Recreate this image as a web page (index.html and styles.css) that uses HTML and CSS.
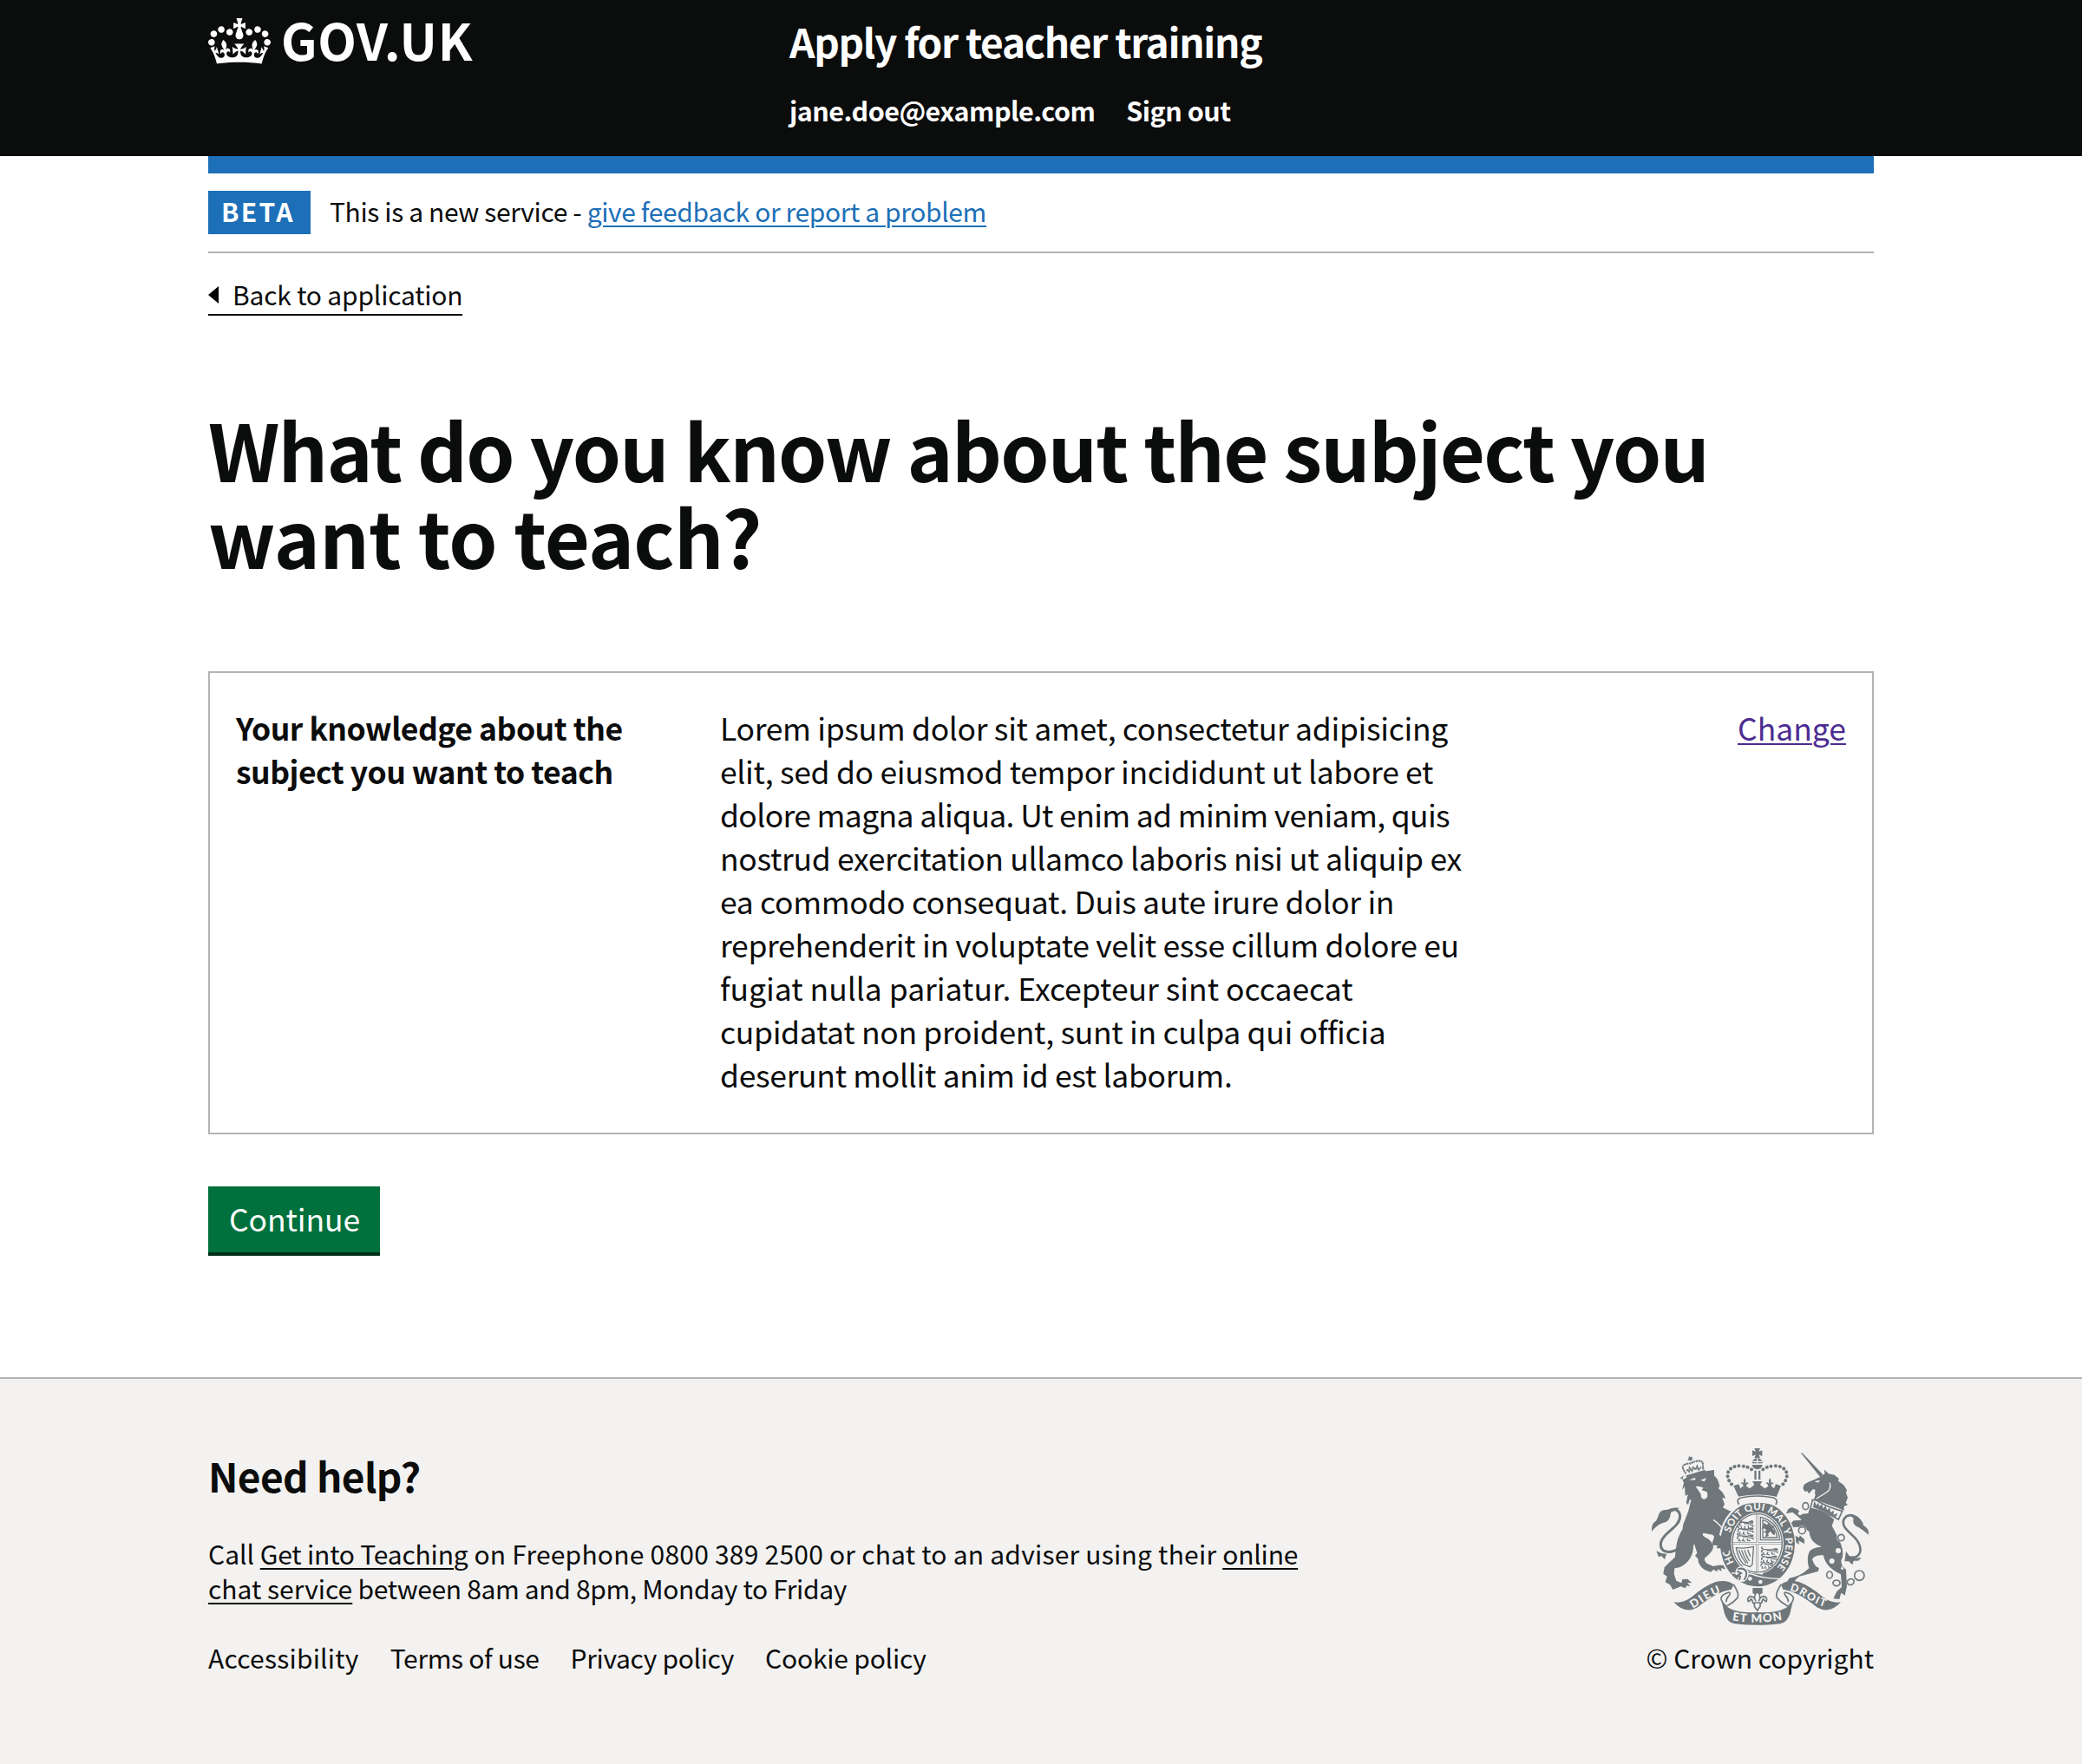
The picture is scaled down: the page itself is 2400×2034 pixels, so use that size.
FILE: index.html
```html
<!DOCTYPE html>
<html lang="en">
<head>
<meta charset="utf-8">
<title>What do you know about the subject you want to teach?</title>
<link rel="stylesheet" href="styles.css">
</head>
<body>
<header class="header">
  <div class="container header-grid">
    <a class="logo" href="#">
      <svg class="crown" viewBox="0 0 132 97" aria-hidden="true"><path fill="currentColor" fill-rule="evenodd" d="M25 30.2c3.5 1.5 7.7-.2 9.1-3.7 1.5-3.6-.2-7.8-3.9-9.2-3.6-1.4-7.6.3-9.1 3.9-1.4 3.5.3 7.5 3.9 9zM9 39.5c3.6 1.5 7.8-.2 9.2-3.7 1.5-3.6-.2-7.8-3.9-9.1-3.6-1.5-7.6.2-9.1 3.8-1.4 3.5.3 7.5 3.8 9zM4.4 57.2c3.5 1.5 7.7-.2 9.1-3.8 1.5-3.6-.2-7.7-3.9-9.1-3.5-1.5-7.6.3-9.1 3.8-1.4 3.5.3 7.6 3.9 9.1zm38.3-21.4c3.5 1.5 7.7-.2 9.1-3.8 1.5-3.6-.2-7.7-3.9-9.1-3.6-1.5-7.6.3-9.1 3.8-1.3 3.6.4 7.7 3.9 9.1zm64.4-5.6c-3.6 1.5-7.8-.2-9.1-3.7-1.5-3.6.2-7.8 3.8-9.2 3.6-1.4 7.7.3 9.2 3.9 1.3 3.5-.4 7.5-3.9 9zm15.9 9.3c-3.6 1.5-7.7-.2-9.1-3.7-1.5-3.6.2-7.8 3.7-9.1 3.6-1.5 7.7.2 9.2 3.8 1.5 3.5-.3 7.5-3.8 9zm4.7 17.7c-3.6 1.5-7.8-.2-9.2-3.8-1.5-3.6.2-7.7 3.9-9.1 3.6-1.5 7.7.3 9.2 3.8 1.3 3.5-.4 7.6-3.9 9.1zM89.3 35.8c-3.6 1.5-7.8-.2-9.2-3.8-1.4-3.6.2-7.7 3.9-9.1 3.6-1.5 7.7.3 9.2 3.8 1.4 3.6-.3 7.7-3.9 9.1zM69.7 17.7l8.9 4.7V9.3l-8.9 2.8c-.2-.3-.5-.6-.9-.9L72.4 0H59.6l3.5 11.2c-.3.3-.6.5-.9.9l-8.8-2.8v13.1l8.8-4.7c.3.3.6.7.9.9l-5 15.4v.1c-.2.8-.4 1.6-.4 2.4 0 4.1 3.1 7.5 7 8.1h.2c.3 0 .7.1 1 .1.4 0 .7 0 1-.1h.2c4-.6 7.1-4.1 7.1-8.1 0-.8-.1-1.7-.4-2.4V34l-5.1-15.4c.4-.2.7-.6 1-.9zM66 92.8c16.9 0 32.8 1.1 47.1 3.2 4-16.9 8.9-26.7 14-33.5l-9.6-3.4c1 4.9 1.1 7.2 0 10.2-1.5-1.4-3-4.3-4.2-8.7L108.6 76c2.8-2 5-3.2 7.5-3.3-4.4 9.4-10 11.9-13.6 11.2-4.3-.8-6.3-4.6-5.6-7.9 1-4.7 5.7-5.9 8-.5 4.3-8.7-3-11.4-7.6-8.8 7.1-7.2 7.9-13.5 2.1-21.1-8 6.1-8.1 12.3-4.5 20.8-4.7-5.4-12.1-2.5-9.5 6.2 3.4-5.2 7.9-2 7.2 3.1-.6 4.3-6.4 7.8-13.5 7.2-10.3-.9-10.9-8-11.2-13.8 2.5-.5 7.1 1.8 11 7.3L80.2 60c-4.1 4.4-8 5.3-12.3 5.4 1.4-4.4 8-11.6 8-11.6H55.5s6.4 7.2 7.9 11.6c-4.2-.1-8-1-12.3-5.4l1.4 16.4c3.9-5.5 8.5-7.7 10.9-7.3-.3 5.8-.9 12.8-11.1 13.8-7.2.6-12.9-2.9-13.5-7.2-.7-5 3.8-8.3 7.1-3.1 2.7-8.7-4.6-11.6-9.4-6.2 3.7-8.5 3.6-14.7-4.6-20.8-5.8 7.6-5 13.9 2.2 21.1-4.7-2.6-11.9.1-7.7 8.8 2.3-5.5 7.1-4.2 8.1.5.7 3.3-1.3 7.1-5.7 7.9-3.5.7-9-1.8-13.5-11.2 2.5.1 4.7 1.3 7.5 3.3l-4.7-15.4c-1.2 4.4-2.7 7.2-4.3 8.7-1.1-3-.9-5.3 0-10.2l-9.5 3.4c5 6.9 9.9 16.7 14 33.5 14.8-2.1 30.8-3.2 47.7-3.2z"/></svg>
      <span class="wordmark">GOV.UK</span>
    </a>
    <div class="header-content">
      <a class="service-name" href="#">Apply for teacher training</a>
      <nav class="header-nav"><a href="#">jane.doe@example.com</a><a href="#">Sign out</a></nav>
    </div>
  </div>
</header>

<div class="container">
  <div class="blue-bar"></div>
  <div class="phase-banner">
    <strong class="tag">BETA</strong>
    <span class="phase-text">This is a new service - <a class="link" href="#">give feedback or report a problem</a></span>
  </div>
  <a class="back-link" href="#"><svg class="arrow" viewBox="0 0 12 20" aria-hidden="true"><path d="M0 10 12 0v20z"/></svg>Back to application</a>

  <main>
    <h1 class="title"><span class="line title-first">What do you know about the subject you</span> <span class="line title-last">want to teach?</span></h1>
    <dl class="summary">
      <dt class="summary-key"><span class="line">Your knowledge about the</span> <span class="line">subject you want to teach</span></dt>
      <dd class="summary-value">
        <span class="line">Lorem ipsum dolor sit amet, consectetur adipisicing</span>
        <span class="line">elit, sed do eiusmod tempor incididunt ut labore et</span>
        <span class="line tighter">dolore magna aliqua. Ut enim ad minim veniam, quis</span>
        <span class="line">nostrud exercitation ullamco laboris nisi ut aliquip ex</span>
        <span class="line">ea commodo consequat. Duis aute irure dolor in</span>
        <span class="line">reprehenderit in voluptate velit esse cillum dolore eu</span>
        <span class="line looser">fugiat nulla pariatur. Excepteur sint occaecat</span>
        <span class="line">cupidatat non proident, sunt in culpa qui officia</span>
        <span class="line">deserunt mollit anim id est laborum.</span>
      </dd>
      <dd class="summary-action"><a class="link visited" href="#">Change</a></dd>
    </dl>
    <button class="button" type="button">Continue</button>
  </main>
</div>

<footer class="footer">
  <div class="container footer-grid">
    <div>
      <h2 class="help-title">Need help?</h2>
      <p class="help-text"><span class="line">Call <a class="link snug" href="#">Get into Teaching</a><span class="wide"> on Freephone 0800 389 2500 or chat to an adviser using their </span><a class="link snug" href="#">online</a></span> <span class="line"><a class="link" href="#">chat service</a><span class="tight"> between 8am and 8pm, Monday to Friday</span></span></p>
      <nav class="footer-nav"><a class="wide" href="#">Accessibility</a><a class="tight" href="#">Terms of use</a><a class="tight" href="#">Privacy policy</a><a class="snug" href="#">Cookie policy</a></nav>
    </div>
    <div class="copyright">
      <svg class="arms" viewBox="42 60 750 612" role="img" aria-label="Royal coat of arms">
        <defs>
          <path id="garter" d="M407 504A98 115 0 0 1 407 274A98 115 0 0 1 407 504"/>
          <path id="dieu" d="M184 614C215 597 244 570 296 554"/>
          <path id="droit" d="M519 552C565 562 590 595 650 612"/>
          <path id="mon" d="M320 655Q407 670 497 653"/>
          <g id="lionet"><path class="thin" d="M3 25q-4-14 7-15l20 2q8-6 14-2M8 24l-2 10 7 1M20 23l-3 10 8 2M30 22l3 11 7-1M36 20l11 1 1 6M8 10Q-2 4 4-2M16 15l22 1"/><circle cx="43" cy="10" r="6"/></g>
        </defs>

        <!-- lion -->
        <g transform="translate(18 42)">
          <path d="M122 122l13 3 16-10 60-18 29-4v19l12 14 7 22-4 9 14 13 11 21-12-2 8 22-6 12 22 11 10 2-15 26-5 18 18 28 5 35-9 25-15 4-8-9-14 1 4-11-19 2 4-10-15-4 12-11-10-13-32-6q-10 8 16 20 18 14 18 30-2 15-30 37-2 12 11 20l19 8 19-4 18 0 8 15-18-5 2 11-14-7-2 9-12-8-10 9-22-8q-22-15-22-38l-10-10 7-10-10-32-3 8q1 28-18 52-18 22-47 25l-2 19 8 24 18 8 3-13 18-1 15 14-16-1 11 13-13-3-5 9-15-6-28 11-10-17-16-9 6-20-13-9 4-22 13-14 23-21 5-38q4-32 22-60l1-13 19-50 10-40-7 4-4 16-7-8 6-28-9 4-2-32-9 12 6-25-5-12 4-14z"/>
          <path class="open" d="M124 360C85 388 50 378 56 343 64 308 122 292 122 252 120 234 106 225 92 232" stroke-width="9"/>
          <path d="M120 225c-25-6-38 8-52 6-25 5-18 26-30 39q-16 8-14 36 14-20 38-30 26-3 28-36zM40 373l18 8 17 2-6 19-12-12-9 4z"/>
          <path d="M143 112l66-20 0 7-65 20z"/>
          <path class="open" d="M142 106l-8-14q-7-13 5-18 14-6 18-3 20-11 30-9 14-2 14 14l1 17M145 92l8 6 2-12 8 10 4-12 8 8 6-12 5 12 9-9" stroke-width="6" stroke-dasharray="7 1.5"/>
          <path d="M153 46l6 2 6-1-2 6 5 5-7 0-2 6-4-5-7 1 3-6z"/>
          <g class="pale"><path d="M153 128l20-9 3 8zM193 128l20-8-7 13zM176 150q15-2 27 5l-7 7 19 7q7 21-8 25-14 0-13-17-8-13-18-27z"/></g>
          <path class="line-pale" d="M237 265q28 19 44 50"/>
        </g>

        <!-- unicorn -->
        <g transform="translate(402 42)">
          <path d="M155 33l7 2 70 74-9 9z"/>
          <path d="M205 125l17-8 17-12-3-14 16 15 20 4 15 13-2 8 18 13 12 18-3 10 6 17-7 17 7 8-13 4 0 15-14-6-90-33 5-14q-4-9 0-18l-8-3-15 16-5-9-8 2-7-11 4-14 15-9z"/>
          <path class="line-pale" d="M256 137q7 25-17 37l-29 18" stroke-width="8"/>
          <path class="pale" d="M203 132l20-4-8 9z"/>
          <path d="M186 226q50 8 85 38l-8 22q20 37 32 65 12 36 0 55 1 22 17 31l3 58-7 32-13-9-6 22-21-2 12-25 17-15-3-44q-54-25-60-66-32-2-39 14 8 26 24 30l-4 12-65 17-12 11-5 11-29 3 12-19q36-4 68-34-11-40 4-62 17-12 40-12-42-16-43-52l-21-16-32-1-12 14 5 20 22 9 3 18-27-20-14-29 6-20 16-14 28-2-15-13-17-14-22 5 7-16 13-6 20 8 14 15 22-2z"/>
          <path d="M115 300l17 18 18 9 2-8 16 14 0 15-18-10-18-5z"/>
          <path class="band" d="M196 196l14 2q39 25 89 37l-13 29q-48-28-97-38z"/>
          <path d="M198 222l4-22 8 15 7-10 2 14 10-9 3 16 10-10 4 16 10-9 2 17 12-7-2 15 16-6-8 14q-38-20-78-34z"/>
          <path class="open" d="M316 393c45 12 60-25 29-63-22-24-54-42-39-69 9-14 25-14 36-6" stroke-width="8"/>
          <path d="M322 246q32 0 47 28l4 12q19 10 18 32-28-24-43-30-15-10-10-28zM312 374l13 18 17 6 24-2-12 11-16 0-4 14-13-12-14 0z"/>
          <g class="pale"><circle cx="172" cy="218" r="15"/><circle cx="160" cy="302" r="16"/><circle cx="295" cy="327" r="15"/><circle cx="285" cy="372" r="9"/><circle cx="263" cy="408" r="9"/><circle cx="153" cy="243" r="7"/><path d="M293 436l5-13 6 15z"/></g>
          <g class="open" stroke-width="5"><ellipse cx="172" cy="218" rx="10" ry="12"/><ellipse cx="160" cy="302" rx="12" ry="12"/><circle cx="295" cy="327" r="11"/><ellipse cx="255" cy="456" rx="10" ry="12"/><ellipse cx="279" cy="484" rx="12" ry="10"/><ellipse cx="328" cy="480" rx="12" ry="10" transform="rotate(-20 328 480)"/><circle cx="358" cy="458" r="17"/></g>
        </g>

        <!-- garter and shield -->
        <ellipse class="pale" cx="407" cy="390" rx="134" ry="152"/>
        <ellipse cx="408" cy="391" rx="129" ry="147"/>
        <ellipse class="pale" cx="407" cy="388" rx="91" ry="106"/>
        <ellipse class="open" cx="407" cy="388" rx="86" ry="101" stroke-width="4"/>
        <path class="open" d="M407 287V489M321 388H493" stroke-width="7"/>
        <path class="line-pale" d="M407 289V487M323 388H491" stroke-width="1.6"/>
        <use href="#lionet" transform="translate(345 305)"/><use href="#lionet" transform="translate(338 330) scale(1.15 .8)"/><use href="#lionet" transform="translate(336 355) scale(1.2 .75)"/>
        <use href="#lionet" transform="translate(420 402) scale(1.2 .75)"/><use href="#lionet" transform="translate(420 427) scale(1.15 .8)"/><use href="#lionet" transform="translate(418 452) scale(.9 .65)"/>
        <path class="thin" d="M418 377v-79q60 14 67 79zM426 369v-61q43 14 50 61z"/>
        <path d="M430 317l10 8 7-7 6 10 15 1-9 7 10 11-2 14-8-5-6-9-8 7 1 10-12 3 4-13-10-5 11-5-8-7-10 1 7-8z"/>
        <path class="thin" d="M334 404q30 4 60-4l-4 62-8 8q-15-6-24-10-18-20-24-56zM343 411q8 25 25 47M353 412q6 22 22 46M363 412q4 18 17 38M374 411l9 23"/>
        <path class="line-pale" d="M318 492q40-2 69 3 47 17 100 16" stroke-width="4"/>
        <path class="pale" d="M332 484q4-14 18-16 18-2 26 18 5 20-12 34-18 6-26-8l6-9-12-5z"/>
        <path class="open" d="M340 478q20-7 29 9 2 18-8 28M337 485l14 7-12 7 9 4-3 12" stroke-width="6"/>
        <circle class="pale" cx="382" cy="511" r="7"/><circle class="pale" cx="418" cy="522" r="7"/><path class="pale" d="M404 488q17 4 25 0l-4 9q-12 0-21-9z"/>
        <text class="arms-text" font-size="34"><textPath href="#garter" startOffset="98">HO</textPath></text>
        <text class="arms-text" font-size="34"><textPath href="#garter" startOffset="204" textLength="388">SOIT QUI MAL Y PENSE</textPath></text>
        <path d="M262 352q28 15 42 34l10 20-10 16-18-4-7-12-13 0 4-11-20 0z"/>

        <!-- crown -->
        <g>
          <path class="open" d="M318 184C288 148 312 118 350 121q30 2 41 16M496 184c30-36 6-66-32-63q-30 2-41 16" stroke-width="12" stroke-linecap="round" stroke-dasharray=".1 15"/>
          <path d="M397 60h20l-5 11 12-4v20l-12-5 5 12h-20l5-12-12 5V67l12 4zM389 112q0-14 12-17h12q12 3 12 17zM389 117h36q-2 14-18 16-16-2-18-16z"/>
          <path class="line-pale" d="M407 95v17M391 106h32" stroke-width="3"/>
          <path d="M397 137h7v31h-7zM411 137h7v31h-7z"/>
          <path d="M325 190l18-6 6 15 10-9q-1-8-10-9 6-7 11 0-2-12 3-18 6 6 3 19 8-8 11 0-8 1-8 9l12 8 16-13-7-12h34l-7 12 16 13 12-8q0-8-8-9 3-8 11 0-3-13 3-19 5 6 3 18 5-7 11 0-9 1-10 9l10 9 6-15 18 6-18 44q-66-19-126 0z"/>
          <path class="pale" d="M332 240q0-12 16-14 60-11 118 0 18 4 15 18l-10 15q-64-22-128 0-12-8-11-19z"/>
          <path class="open" d="M344 254q-12-18 7-23 56-12 113 0 16 6 7 24" stroke-width="5"/>
        </g>

        <!-- motto ribbon -->
        <path d="M118 592q30 5 60-16 46-40 85-54 40-9 62 9l-2 16q-30 5-60 20-38 22-62 43-45 25-83-18zM696 592q-30 5-60-16-46-40-85-54-40-9-62 9l2 16q30 5 60 20 38 22 62 43 45 25 83-18z"/>
        <path class="band" d="M325 531q22 34 13 47-12 14-28 23l-10 6q-20-19-18-30 3-12 28-19 6 0 0 11-12 12-10 23M489 531q-22 34-13 47 12 14 28 23l10 6q20-19 18-30-3-12-28-19-6 0 0 11 12 12 10 23"/>
        <path d="M284 590q28 42 123 37 95 5 123-37l-10 42q-9 30-35 35-78 9-156 0-26-5-35-35z"/>
        <text class="arms-text" font-size="39"><textPath href="#dieu" textLength="112">DIEU</textPath></text>
        <text class="arms-text" font-size="37"><textPath href="#droit" textLength="134">DROIT</textPath></text>
        <text class="arms-text" font-size="40"><textPath href="#mon" textLength="174">ET MON</textPath></text>

        <path d="M391 543h34v19q-17 8-34 0z"/>
        <path class="band" d="M407 555q16 18 5 34 6-17 18-17 14 4 8 18-8-2-9-9-6 2-6 12l-6 6v8l-10 14-10-14v-8l-6-6q0-10-6-12-1 7-9 9-6-14 8-18 12 0 18 17-11-16 5-34zM396 594h22"/>
      </svg>
      <a href="#">© Crown copyright</a>
    </div>
  </div>
</footer>
</body>
</html>
```
FILE: styles.css
```css
* { box-sizing: border-box; }

body {
  margin: 0;
  background: #fff;
  color: #0b0c0c;
  font-family: "Noto Sans CJK JP", "Noto Sans", sans-serif;
  font-size: 30px;
  line-height: 40px;
}

a { color: inherit; text-decoration: none; }
h1, h2, p, dl, dd { margin: 0; }

.container { width: 1920px; margin: 0 auto; }
.line { display: block; white-space: nowrap; }

.link {
  text-decoration: underline;
  text-decoration-thickness: 2px;
  text-underline-offset: 4px;
}
.visited { color: #4c2c92; text-underline-offset: 3px; }
.wide { letter-spacing: 0.22px; }
.snug { letter-spacing: -0.2px; }
.tight { letter-spacing: -0.35px; }

/* Header */
.header { height: 180px; background: #0b0c0c; color: #fff; }
.header-grid { display: grid; grid-template-columns: 670px 1fr; }
.logo { display: flex; align-items: flex-start; gap: 12px; padding-top: 21px; }
.crown { width: 72px; height: 53px; }
.wordmark { font-size: 58px; font-weight: 700; line-height: 48px; letter-spacing: 0.7px; }
.header-content { display: flex; flex-direction: column; padding-top: 17px; }
.service-name { font-size: 46px; font-weight: 700; line-height: 60px; letter-spacing: -1.3px; }
.header-nav { display: flex; gap: 36px; margin-top: 30px; font-size: 30.5px; font-weight: 700; letter-spacing: -0.53px; }

/* Phase banner */
.blue-bar { height: 20px; background: #1d70b8; }
.phase-banner {
  display: flex;
  align-items: center;
  gap: 22px;
  height: 92px;
  border-bottom: 2px solid #b1b4b6;
}
.phase-banner .link { color: #1d70b8; }
.phase-text { letter-spacing: -0.38px; padding-bottom: 4px; }
.tag {
  display: flex;
  width: 118px;
  height: 50px;
  padding-left: 15px;
  background: #1d70b8;
  color: #fff;
  font-weight: 700;
  line-height: 46px;
  letter-spacing: 2.3px;
}

.back-link {
  display: inline-flex;
  align-items: center;
  gap: 16px;
  height: 45px;
  margin-top: 27px;
  padding-bottom: 3px;
  border-bottom: 2px solid #0b0c0c;
  letter-spacing: -0.2px;
}
.arrow { width: 12px; height: 20px; margin-top: 2px; }

/* Content */
.title { margin-top: 103px; font-size: 90px; font-weight: 700; line-height: 100px; }
.title-first { letter-spacing: -1.75px; }
.title-last { letter-spacing: -0.8px; }

.summary {
  display: grid;
  grid-template-columns: 558px 1fr auto;
  margin-top: 107px;
  padding: 38px 30px 40px;
  height: 534px;
  border: 2px solid #b1b4b6;
  font-size: 35.5px;
  line-height: 50px;
}
.summary-key { font-weight: 700; letter-spacing: -0.5px; }
.summary-value { letter-spacing: -0.33px; }
.tighter { letter-spacing: -0.65px; }
.looser { letter-spacing: -0.02px; }

.button {
  display: block;
  width: 198px;
  height: 80px;
  margin-top: 60px;
  padding: 0 0 7px 1px;
  border: 0;
  background: #00703c;
  box-shadow: inset 0 -4px 0 #002d18;
  color: #fff;
  font-family: inherit;
  font-size: 35.5px;
  line-height: 60px;
  letter-spacing: -0.1px;
}

/* Footer */
.footer {
  height: 446px;
  margin-top: 140px;
  padding-top: 80px;
  border-top: 2px solid #b1b4b6;
  background: #f3f2f1;
}
.footer-grid { display: flex; justify-content: space-between; }
.help-title { padding-top: 1px; font-size: 46px; font-weight: 700; line-height: 60px; letter-spacing: -0.6px; }
.help-text { margin-top: 40px; }
.footer-nav { display: flex; gap: 36px; margin-top: 40px; }
.copyright { display: flex; flex-direction: column; align-items: center; }
.arms { width: 250px; height: 204px; margin-bottom: 17px; fill: #6f777b; color: #6f777b; }

.arms .pale { fill: #f3f2f1; }
.arms .open { fill: none; stroke: #6f777b; }
.arms .thin { fill: none; stroke: #6f777b; stroke-width: 4; }
.arms .line-pale { fill: none; stroke: #f3f2f1; stroke-width: 4; }
.arms .band { fill: #f3f2f1; stroke: #6f777b; stroke-width: 5; }
.arms .arms-text { fill: #f3f2f1; font-family: Lato, sans-serif; font-weight: 900; }
```
